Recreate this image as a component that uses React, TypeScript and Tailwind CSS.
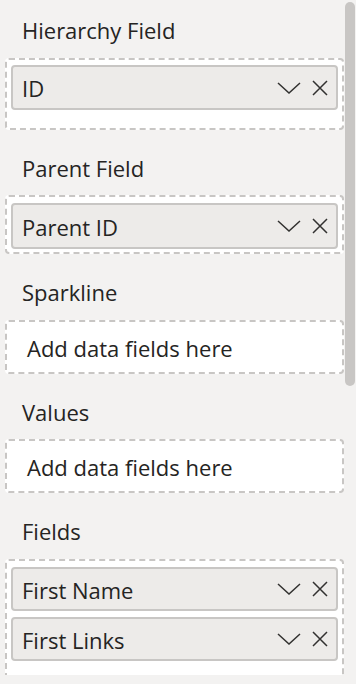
import React from "react";

const font = { fontFamily: '"Open Sans", "Noto Sans", sans-serif' };

const Chevron = () => (
  <svg width="24" height="12" viewBox="0 0 24 12" fill="none">
    <path d="M1 1 L12 11 L23 1" stroke="#323130" strokeWidth="1.5" />
  </svg>
);

const Close = () => (
  <svg width="16" height="16" viewBox="0 0 16 16" fill="none">
    <path d="M1 1 L15 15 M15 1 L1 15" stroke="#323130" strokeWidth="1.5" />
  </svg>
);

const Chip = ({ label, h = "h-[45px]" }: { label: string; h?: string }) => (
  <div
    className={`flex items-center ${h} rounded-[4px] border-2 border-[#c8c6c4] bg-[#edebe9] pl-[9px] pr-[8px]`}
  >
    <span className="flex-1 text-[22px] text-[#252423] leading-none pt-[1px]">{label}</span>
    <div className="flex items-center gap-[11px]">
      <Chevron />
      <Close />
    </div>
  </div>
);

const Label = ({ children }: { children: React.ReactNode }) => (
  <div className="h-[28px] leading-[28px] pl-[17px] text-[22px] text-[#252423]">{children}</div>
);

const Placeholder = () => (
  <div className="flex items-center h-[54px] rounded-[4px] border-2 border-dashed border-[#c8c6c4] bg-white pl-[20px]">
    <span className="text-[22px] text-[#252423] leading-none pt-[1px]">Add data fields here</span>
  </div>
);

export default function App() {
  return (
    <div className="relative w-[356px] h-[684px] bg-[#f3f2f1] overflow-hidden" style={font}>
      <div className="h-[675px] overflow-hidden">
        <div className="w-[339px] ml-[5px] pt-[16px] flex flex-col">
          <Label>Hierarchy Field</Label>
          <div className="mt-[14px] rounded-[4px] border-2 border-dashed border-[#c8c6c4] bg-white pt-[5px] px-[4px] pb-[18px]">
            <Chip label="ID" />
          </div>

          <div className="mt-[24px]">
            <Label>Parent Field</Label>
          </div>
          <div className="mt-[13px] rounded-[4px] border-2 border-dashed border-[#c8c6c4] bg-white pt-[6px] px-[4px] pb-[3px]">
            <Chip label="Parent ID" h="h-[46px]" />
          </div>

          <div className="mt-[24px]">
            <Label>Sparkline</Label>
          </div>
          <div className="mt-[14px]">
            <Placeholder />
          </div>

          <div className="mt-[24px]">
            <Label>Values</Label>
          </div>
          <div className="mt-[13px]">
            <Placeholder />
          </div>

          <div className="mt-[24px]">
            <Label>Fields</Label>
          </div>
          <div className="mt-[14px] rounded-[4px] border-2 border-dashed border-[#c8c6c4] bg-white pt-[6px] px-[4px] pb-[30px] flex flex-col gap-[6px]">
            <Chip label="First Name" h="h-[44px]" />
            <Chip label="First Links" h="h-[44px]" />
          </div>
        </div>
      </div>
      {/* scrollbar thumb */}
      <div className="absolute left-[345px] top-[2px] w-[10px] h-[384px] rounded-full bg-[#c8c6c4]" />
    </div>
  );
}
